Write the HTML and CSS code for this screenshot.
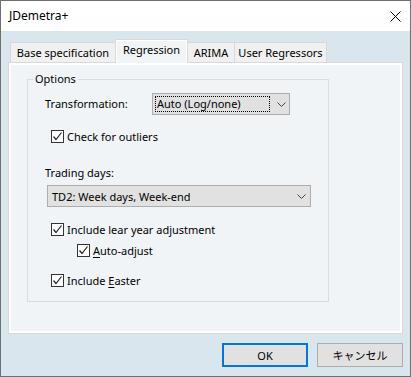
FILE: index.html
```html
<!DOCTYPE html>
<html lang="en">
<head>
    <meta charset="UTF-8">
    <title>JDemetra+</title>
    <link rel="stylesheet" href="styles.css">
</head>
<body>
    <div class="window">
        <div class="titlebar">
            <span class="title">JDemetra+</span>
            <svg class="close" width="11" height="11" viewBox="0 0 11 11">
                <path d="M0.5 0.5 L10.5 10.5 M10.5 0.5 L0.5 10.5" stroke="#000" stroke-width="1" fill="none"/>
            </svg>
        </div>

        <div class="dialog">
            <div class="tabs">
                <div class="tab tab-base">Base specification</div>
                <div class="tab tab-regression active">Regression</div>
                <div class="tab tab-arima">ARIMA</div>
                <div class="tab tab-user">User Regressors</div>
            </div>

            <div class="panel">
                <fieldset class="group">
                    <legend>Options</legend>

                    <div class="row transform">
                        <span class="label">Transformation:</span>
                        <div class="combo combo-short">
                            <span class="focus">Auto (Log/none)</span>
                            <svg class="chevron" width="9" height="5" viewBox="0 0 9 5"><path d="M0.5 0.5 L4.5 4.5 L8.5 0.5" stroke="#444" fill="none"/></svg>
                        </div>
                    </div>

                    <label class="check outliers"><span class="box"><svg width="11" height="11" viewBox="0 0 11 11"><path d="M1.5 5.5 L4 8.5 L9.5 1.5" stroke="#222" stroke-width="1.2" fill="none"/></svg></span><span>Check for outliers</span></label>

                    <div class="label trading">Trading days:</div>
                    <div class="combo combo-long">
                        <span>TD2: Week days, Week-end</span>
                        <svg class="chevron" width="9" height="5" viewBox="0 0 9 5"><path d="M0.5 0.5 L4.5 4.5 L8.5 0.5" stroke="#444" fill="none"/></svg>
                    </div>

                    <label class="check leap"><span class="box"><svg width="11" height="11" viewBox="0 0 11 11"><path d="M1.5 5.5 L4 8.5 L9.5 1.5" stroke="#222" stroke-width="1.2" fill="none"/></svg></span><span>Include lear year adjustment</span></label>
                    <label class="check sub"><span class="box"><svg width="11" height="11" viewBox="0 0 11 11"><path d="M1.5 5.5 L4 8.5 L9.5 1.5" stroke="#222" stroke-width="1.2" fill="none"/></svg></span><span><u>A</u>uto-adjust</span></label>
                    <label class="check easter"><span class="box"><svg width="11" height="11" viewBox="0 0 11 11"><path d="M1.5 5.5 L4 8.5 L9.5 1.5" stroke="#222" stroke-width="1.2" fill="none"/></svg></span><span>Include <u>E</u>aster</span></label>
                </fieldset>
            </div>

            <div class="buttons">
                <button class="btn default">OK</button>
                <button class="btn">キャンセル</button>
            </div>
        </div>
    </div>
</body>
</html>
```

FILE: styles.css
```css
:root {
    --frame: #6f6f6f;
    --dialog: #dae6ee;
    --panel: #f0f4f7;
    --line: #d9d9d9;
    --button: #e1e1e1;
    --button-border: #adadad;
    --accent: #0078d7;
}

body {
    margin: 0;
    font-family: "Noto Sans", "Noto Sans CJK JP", sans-serif;
    font-size: 11px;
    color: #000;
}

.window {
    width: 411px;
    height: 377px;
    box-sizing: border-box;
    border: 1px solid var(--frame);
    background: var(--dialog);
}

.titlebar {
    height: 30px;
    background: #fff;
    display: flex;
    align-items: center;
    justify-content: space-between;
    padding: 0 9px 0 8px;
}

.title {
    font-size: 12px;
    line-height: 16px;
}

.close {
    display: block;
}

.dialog {
    padding-top: 8px;
}

/* tabs */
.tabs {
    display: flex;
    align-items: flex-end;
    height: 23px;
    margin-left: 9px;
}

.tab {
    height: 20px;
    box-sizing: border-box;
    border: 1px solid var(--line);
    border-bottom: 0;
    background: #f0f0f0;
    text-align: center;
    line-height: 19px;
    white-space: nowrap;
}

.tab + .tab {
    margin-left: -1px;
}

.tab-base { width: 106px; }
.tab-regression { width: 73px; }
.tab-arima { width: 48px; }
.tab-user { width: 93px; }

.tab.active {
    height: 24px;
    margin-bottom: -1px;
    position: relative;
    z-index: 1;
    background: var(--panel);
    box-shadow: inset 1px 1px 0 #fff, inset -1px 0 0 #fff;
    line-height: 20px;
}

.panel {
    margin: 0 7px;
    height: 272px;
    box-sizing: border-box;
    border: 1px solid var(--line);
    box-shadow: inset 0 0 0 2px #fff;
    background: var(--panel);
    padding: 8px 0 0 18px;
}

/* group box */
.group {
    width: 302px;
    height: 231px;
    box-sizing: border-box;
    margin: 0;
    padding: 0 0 0 17px;
    border: 1px solid #dcdcdc;
}

.group legend {
    margin-left: -12px;
    padding: 0 2px;
    line-height: 16px;
}

.label {
    line-height: 16px;
}

.row {
    display: flex;
    align-items: center;
}

.transform {
    margin-top: 6px;
}

.transform .label {
    width: 107px;
}

.combo {
    height: 22px;
    box-sizing: border-box;
    background: var(--button);
    border: 1px solid var(--button-border);
    display: flex;
    align-items: center;
    justify-content: space-between;
}

.combo-short {
    width: 138px;
    padding: 2px 3px 2px 2px;
}

.combo-short .focus {
    width: 115px;
    height: 16px;
    box-sizing: border-box;
    border: 1px dotted #000;
    line-height: 14px;
    padding-left: 1px;
}

.combo-long {
    width: 264px;
    margin: 4px 0 0 2px;
    padding: 0 4px 0 4px;
}

.chevron {
    display: block;
}

.check {
    display: flex;
    align-items: center;
    height: 17px;
    margin-left: 6px;
}

.check .box {
    width: 13px;
    height: 13px;
    box-sizing: border-box;
    border: 1px solid #333;
    background: #fff;
    margin-right: 3px;
    display: flex;
    align-items: center;
    justify-content: center;
}

.check u {
    text-decoration-thickness: 1px;
    text-underline-offset: 2px;
}

.outliers { margin-top: 13px; }
.trading { margin-top: 20px; }
.leap { margin-top: 14px; }
.sub { margin: 4px 0 0 32px; }
.easter { margin-top: 13px; }

/* buttons */
.buttons {
    display: flex;
    justify-content: flex-end;
    gap: 9px;
    margin-top: 9px;
    padding-right: 7px;
}

.btn {
    width: 86px;
    height: 24px;
    box-sizing: border-box;
    background: var(--button);
    border: 1px solid var(--button-border);
    font: inherit;
    padding: 0;
}

.btn.default {
    border: 2px solid var(--accent);
}
```
